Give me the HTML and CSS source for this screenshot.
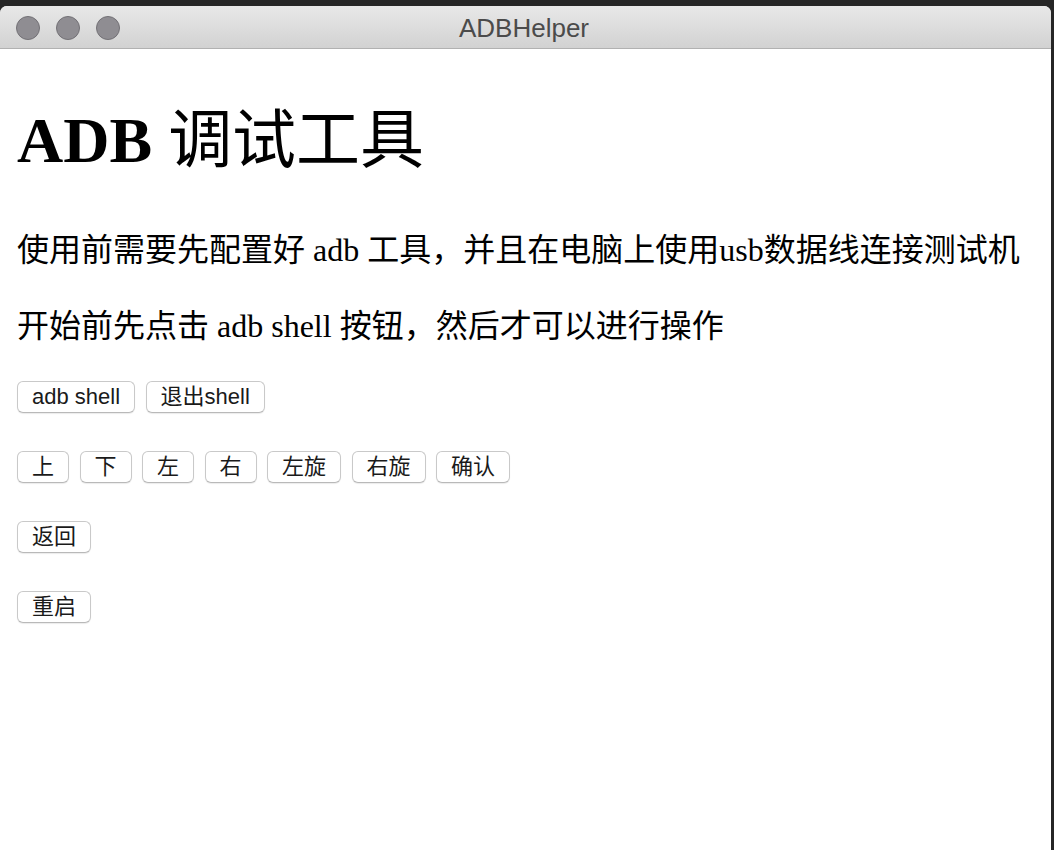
FILE: index.html
```html
<!DOCTYPE html>
<html lang="zh-CN">
<head>
<meta charset="utf-8">
<title>ADBHelper</title>
<link rel="stylesheet" href="styles.css">
</head>
<body>
<div class="window">
  <div class="titlebar">
    <div class="lights">
      <span class="light"></span>
      <span class="light"></span>
      <span class="light"></span>
    </div>
    <div class="title">ADBHelper</div>
  </div>
  <div class="content">
    <h1 class="heading">ADB <span class="heading-cjk">调试工具</span></h1>
    <p class="text">使用前需要先配置好 adb 工具，并且在电脑上使用usb数据线连接测试机</p>
    <p class="text">开始前先点击 adb shell 按钮，然后才可以进行操作</p>
    <div class="row">
      <button class="btn">adb shell</button>
      <button class="btn">退出shell</button>
    </div>
    <div class="row">
      <button class="btn">上</button>
      <button class="btn">下</button>
      <button class="btn">左</button>
      <button class="btn">右</button>
      <button class="btn">左旋</button>
      <button class="btn">右旋</button>
      <button class="btn">确认</button>
    </div>
    <div class="row">
      <button class="btn">返回</button>
    </div>
    <div class="row">
      <button class="btn">重启</button>
    </div>
  </div>
</div>
</body>
</html>
```
FILE: styles.css
```css
html, body {
  margin: 0;
  padding: 0;
  height: 100%;
}
body {
  background: #262626;
  overflow: hidden;
}
.window {
  margin: 6px 3px 0 0;
  height: 844px;
  background: #ffffff;
  border-radius: 7px 7px 0 0;
  overflow: hidden;
}
.titlebar {
  position: relative;
  height: 42px;
  background: linear-gradient(#e8e8e8, #d2d2d2);
  border-bottom: 1px solid #b1b1b1;
  display: flex;
  align-items: center;
  justify-content: center;
}
.lights {
  position: absolute;
  left: 16px;
  top: 10px;
  display: flex;
  gap: 16px;
}
.light {
  width: 22px;
  height: 22px;
  border-radius: 50%;
  background: #8f8d92;
  border: 1px solid #737176;
}
.title {
  font-family: "Liberation Sans", "Noto Sans CJK SC", sans-serif;
  font-size: 26px;
  color: #4b4b4b;
  margin-top: 2px;
  margin-right: 3px;
}
.content {
  padding: 0 17px;
  font-family: "Liberation Serif", "Noto Sans CJK SC", serif;
  color: #000;
}
.heading {
  margin: 56px 0 0;
  font-size: 64px;
  line-height: 72px;
  font-weight: bold;
}
.heading-cjk {
  font-weight: normal;
}
.text {
  margin: 51px 0 0;
  font-size: 32px;
  line-height: 44px;
}
.text + .text {
  margin-top: 32px;
}
.row {
  display: flex;
  gap: 10.5px;
  margin-top: 32px;
  height: 37px;
  padding-top: 1px;
  align-items: flex-start;
}
.btn {
  font-family: "Liberation Sans", "Noto Sans CJK SC", sans-serif;
  font-size: 22px;
  line-height: 30px;
  height: 32px;
  padding: 0 14px;
  color: #1a1a1a;
  background: #ffffff;
  border: 1px solid #c9c9c9;
  border-bottom-color: #b9b9b9;
  border-radius: 6px;
  box-shadow: 0 1px 1px rgba(0, 0, 0, 0.08);
}
```
